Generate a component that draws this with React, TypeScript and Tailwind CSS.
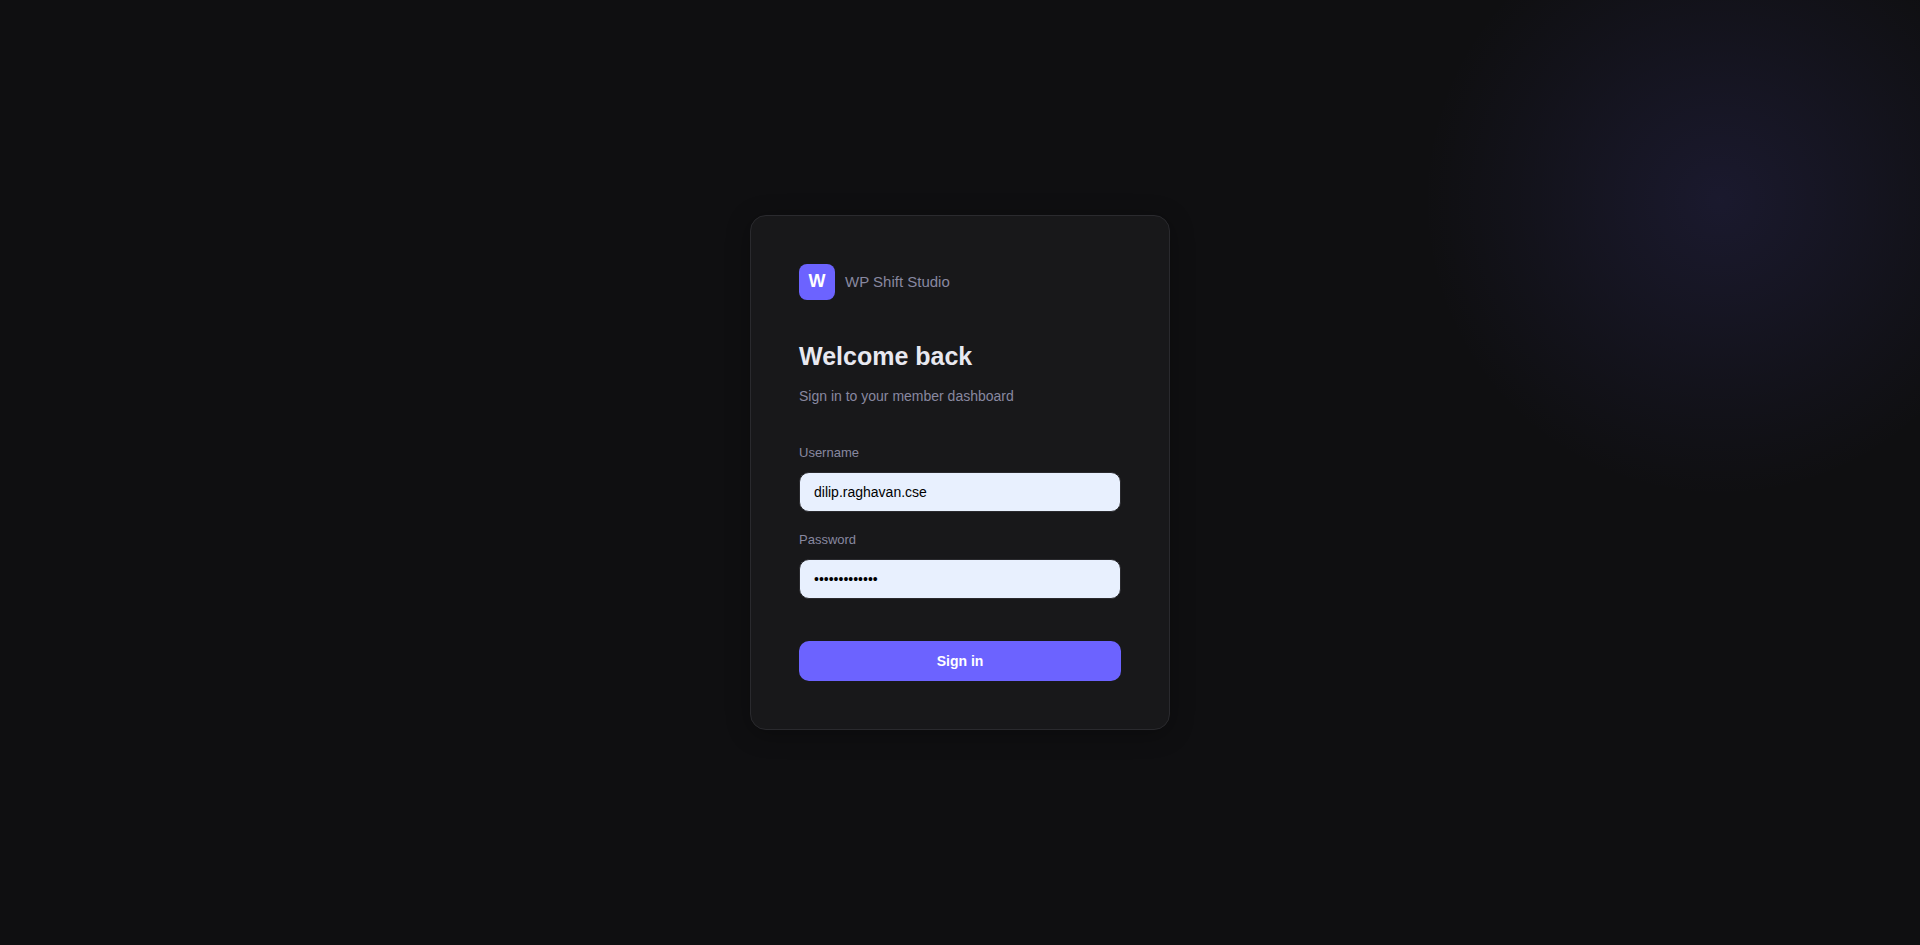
import { useState } from 'react'

interface FieldProps {
  id: string
  label: string
  type: string
  value: string
  autoComplete: string
  onChange: (value: string) => void
}

function Field({ id, label, type, value, autoComplete, onChange }: FieldProps) {
  return (
    <div>
      <label htmlFor={id} className="block mb-2.5 text-[13px] leading-[19px] font-medium text-[#8888a0]">
        {label}
      </label>
      <input
        id={id}
        type={type}
        value={value}
        autoComplete={autoComplete}
        onChange={e => onChange(e.target.value)}
        className="block w-full h-10 px-3.5 text-sm text-black bg-[#e8f0fe] border border-[#2a2a2e] rounded-[10px] outline-none focus:border-[#6c63ff]"
      />
    </div>
  )
}

export default function App() {
  const [username, setUsername] = useState('dilip.raghavan.cse')
  const [password, setPassword] = useState('correcthorse1')

  const handleSubmit = (e: React.FormEvent) => {
    e.preventDefault()
  }

  return (
    <div className="relative min-h-screen flex items-center justify-center overflow-hidden bg-[#0f0f11] font-['Liberation_Sans',Arial,sans-serif]">
      {/* Background glow */}
      <div className="absolute -top-[100px] -right-[100px] size-[600px] pointer-events-none bg-[radial-gradient(circle,rgba(108,99,255,0.12)_0%,transparent_70%)]" />

      <main className="relative w-full max-w-[420px] p-12 bg-[#18181a] border border-[#2a2a2e] rounded-2xl shadow-[0_4px_24px_rgba(0,0,0,0.3)]">
        <div className="flex items-center gap-2.5 mb-9">
          <div className="size-9 pb-0.5 flex items-center justify-center rounded-lg bg-[#6c63ff] text-lg font-bold text-white">
            W
          </div>
          <span className="text-[15px] text-[#8888a0]">WP Shift Studio</span>
        </div>

        <h1 className="text-[25px] leading-[41px] font-bold text-[#e8e8f0]">Welcome back</h1>
        <p className="mt-2 mb-9 text-sm leading-[22px] text-[#8888a0]">Sign in to your member dashboard</p>

        <form onSubmit={handleSubmit}>
          <div className="space-y-[18px]">
            <Field id="username" label="Username" type="text" value={username} autoComplete="username" onChange={setUsername} />
            <Field id="password" label="Password" type="password" value={password} autoComplete="current-password" onChange={setPassword} />
          </div>
          <button type="submit" className="w-full h-10 mt-[42px] rounded-[10px] bg-[#6c63ff] text-sm font-bold text-white cursor-pointer">
            Sign in
          </button>
        </form>
      </main>
    </div>
  )
}
